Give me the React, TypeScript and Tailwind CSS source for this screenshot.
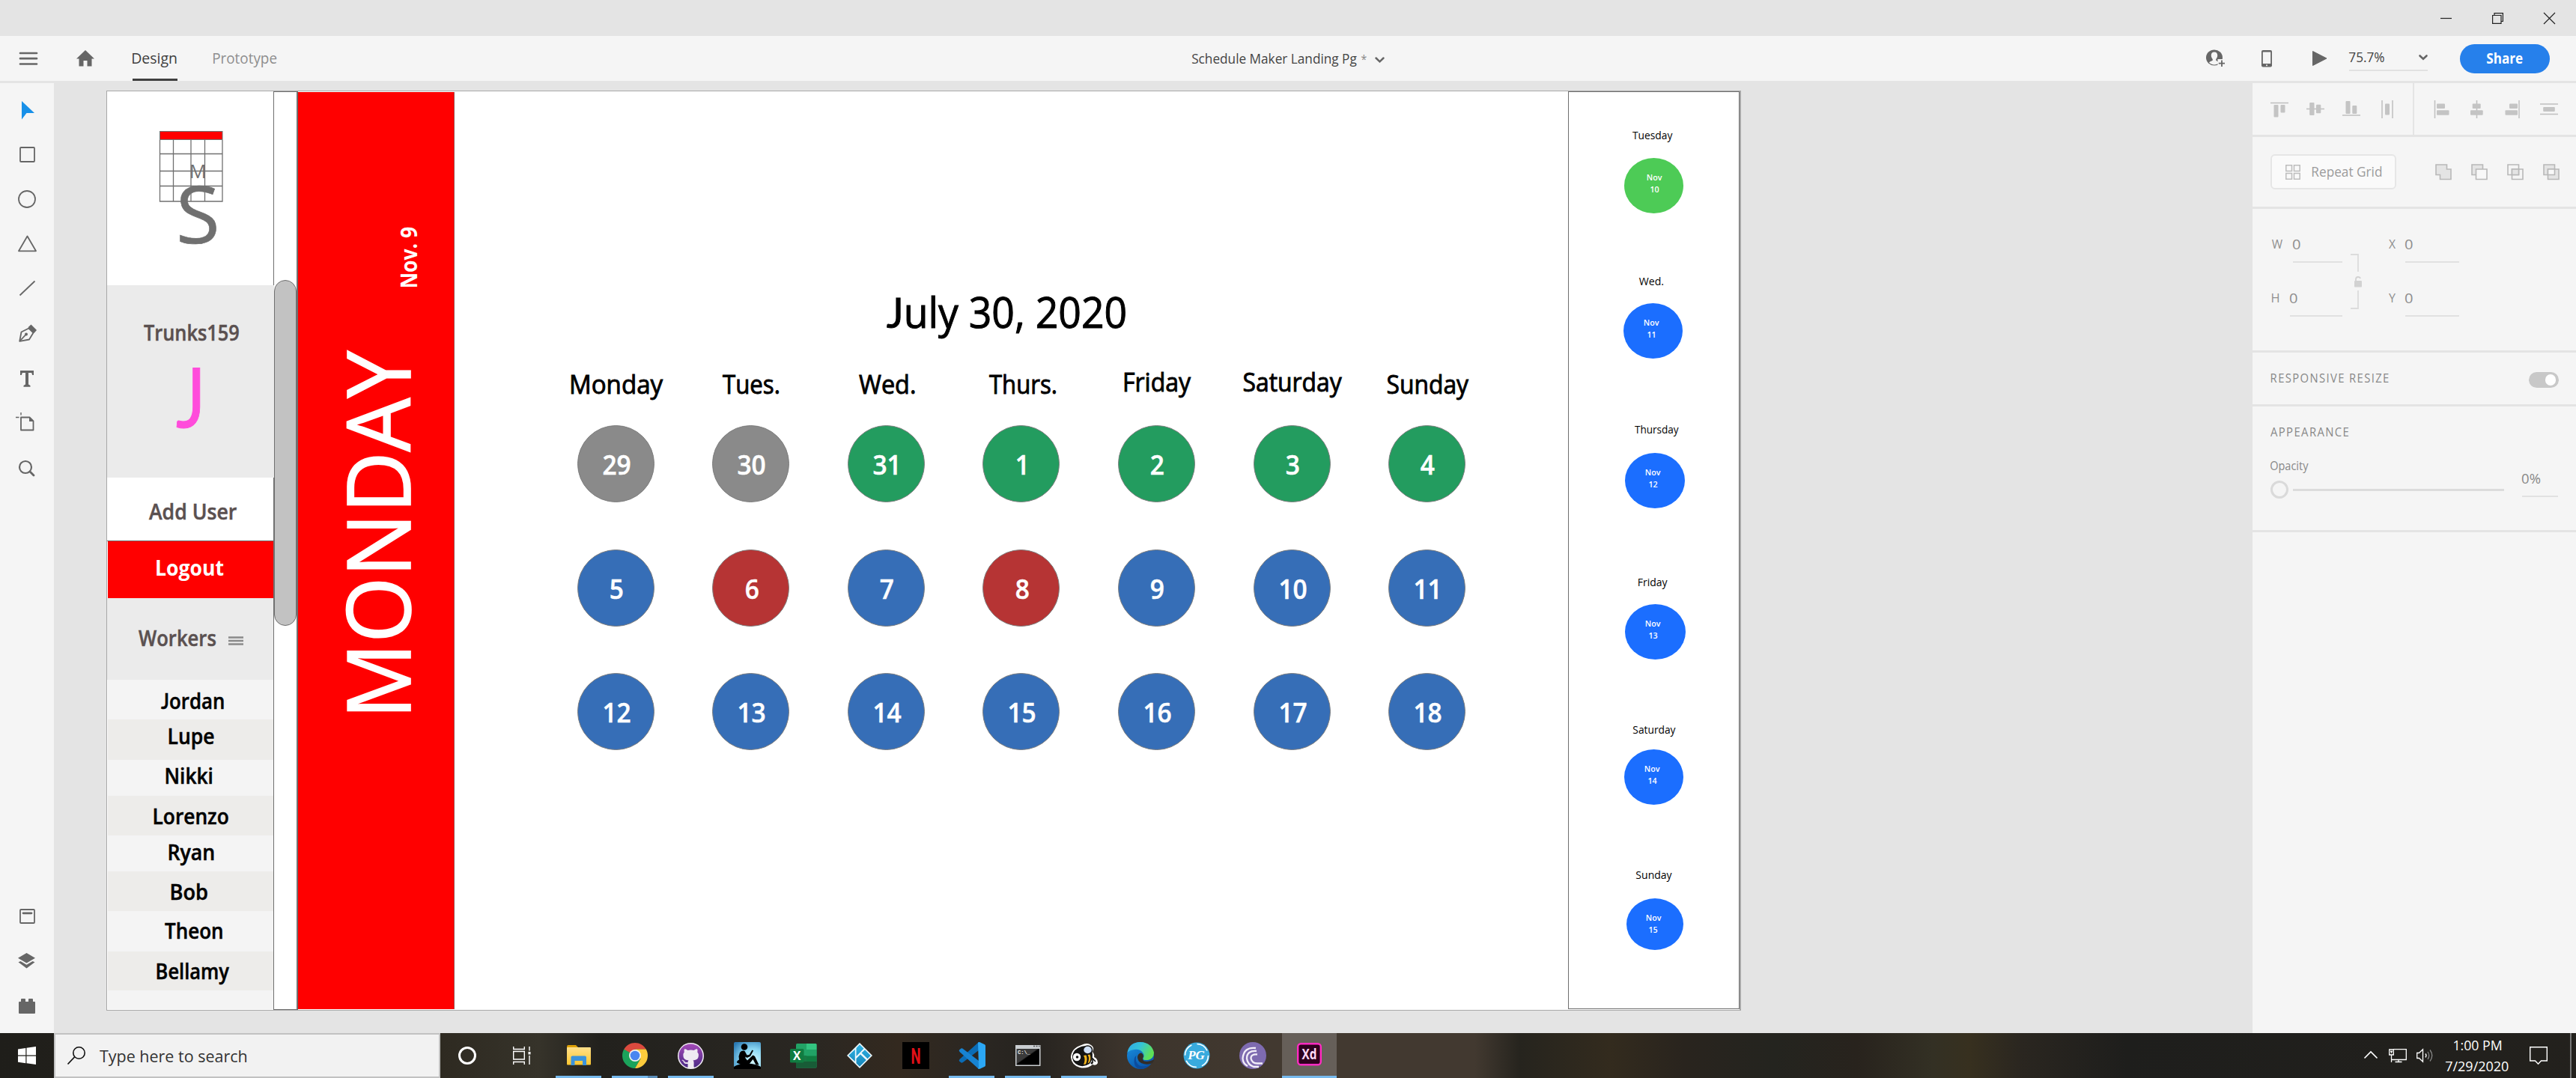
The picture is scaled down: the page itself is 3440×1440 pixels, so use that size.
import React, { useLayoutEffect, useRef, useState } from "react";
import { FaGithub } from "react-icons/fa";

/* A line of text condensed or widened so that its ink fills exactly `w` pixels. */
function Fit({ text, w, className = "" }: { text: string; w: number; className?: string }) {
  const ref = useRef<HTMLDivElement>(null);
  const [fit, setFit] = useState({ k: 1, x: 0 });
  const parts = text[0] === "J" ? ["J", text.slice(1)] : ["", text];
  useLayoutEffect(() => {
    if (!ref.current) return;
    const cs = getComputedStyle(ref.current);
    const size = parseFloat(cs.fontSize);
    const spacing = parseFloat(cs.letterSpacing) || 0;
    const ctx = document.createElement("canvas").getContext("2d")!;
    let total = spacing * (text.length - 1);
    let left: number | null = null;
    let right = 0;
    parts.forEach((p, i) => {
      if (!p) return;
      ctx.font = `${cs.fontWeight} ${size * 10}px "${i === 0 ? "Lato" : "Open Sans"}"`;
      const m = ctx.measureText(p);
      total += m.width / 10;
      if (left === null) left = -m.actualBoundingBoxLeft / 10;
      right = (m.width - m.actualBoundingBoxRight) / 10;
    });
    const lb = left ?? 0;
    const k = w / (total - lb - right);
    setFit({ k, x: -lb * k });
  }, [text, w]);
  return (
    <div ref={ref} className={"shrink-0 whitespace-nowrap leading-none " + className} style={{ width: w }}>
      <div className="w-max origin-left" style={{ transform: `translateX(${fit.x}px) scaleX(${fit.k})` }}>
        {parts[0] && <span className="font-['Lato'] leading-none">{parts[0]}</span>}
        {parts[1]}
      </div>
    </div>
  );
}

function Svg({ w, h, className = "", children }: { w: number; h: number; className?: string; children: React.ReactNode }) {
  return (
    <svg width={w} height={h} viewBox={`0 0 ${w} ${h}`} fill="none" className={"shrink-0 overflow-visible " + className}>
      {children}
    </svg>
  );
}

function TitleBar() {
  return (
    <div className="flex h-12 items-center justify-end gap-[54px] pr-[28px]">
      <Svg w={15} h={15}><path d="M0 7.5H15" stroke="#222" strokeWidth="1.2" /></Svg>
      <Svg w={15} h={15}><path d="M.6 3.5H12V14.4H.6zM3 3.5V.6H14.4V11.5H12" stroke="#222" strokeWidth="1.2" /></Svg>
      <Svg w={15} h={15}><path d="M0 0L15 15M15 0L0 15" stroke="#222" strokeWidth="1.2" /></Svg>
    </div>
  );
}

function Header() {
  return (
    <div className="flex h-[60px] items-center bg-[#f5f5f5]">
      <Svg w={24} h={18} className="ml-[26px]"><path d="M1 2H23M1 9.2H23M1 16.5H23" stroke="#666" strokeWidth="2.7" strokeLinecap="round" /></Svg>
      <Svg w={24} h={22} className="ml-[52px]"><path d="M12 0L24 11.5H20.5V21.5H14.5V14H9.5V21.5H3.5V11.5H0z" fill="#666" strokeLinejoin="round" /></Svg>
      <div className="ml-[51px] flex h-full w-[60px] flex-col justify-between border-b-[3px] border-[#404040] pt-[20px]">
        <Fit text="Design" w={58.5} className="text-[20px] text-[#3f3f3f]" />
      </div>
      <Fit text="Prototype" w={84} className="ml-[48px] text-[20px] text-[#8e8e8e]" />
      <Fit text="Schedule Maker Landing Pg" w={219.5} className="ml-[1223px] text-[19px] text-[#444]" />
      <Fit text="*" w={6.5} className="ml-[6px] text-[17px] text-[#888]" />
      <Svg w={13} h={8} className="ml-[12px] mt-1"><path d="M1.5 1.5L6.5 6.3L11.5 1.5" stroke="#666" strokeWidth="2.5" strokeLinecap="round" /></Svg>
      <div className="ml-auto flex items-center pr-[35px]">
        <Svg w={25} h={24} className="mr-[49px]">
          <ellipse cx="11" cy="11" rx="11" ry="10.5" fill="#666" />
          <path d="M11 3.5C8 3.5 6.8 5.5 6.8 8C6.8 10.5 8 12 8.8 13V14.5C8 15.5 5 16 4 17.5C6 19.5 8.5 20.5 11 20.5C13 20.5 15 19.8 17 18C16.5 16 14 15.5 13.2 14.5V13C14 12 15.2 10.5 15.2 8C15.2 5.5 14 3.5 11 3.5z" fill="#f5f5f5" />
          <rect x="15.5" y="13" width="10" height="12" fill="#f5f5f5" />
          <path d="M21 14.5V23M16.8 18.7H25" stroke="#666" strokeWidth="1.8" />
        </Svg>
        <Svg w={14} h={23} className="mr-[54px]">
          <rect width="14" height="22.5" rx="2" fill="#666" />
          <rect x="1.8" y="2.5" width="10.4" height="15.5" fill="#f5f5f5" />
          <circle cx="7" cy="20.2" r="1" fill="#f5f5f5" />
        </Svg>
        <Svg w={20} h={20} className="mr-[29px]"><path d="M.5 .5L19 10L.5 19.5z" fill="#666" stroke="#666" strokeLinejoin="round" /></Svg>
        <div className="mr-[43px] mt-[4px] flex h-[30px] w-[105px] items-start justify-between border-b-2 border-[#e1e1e1] pt-[2px]">
          <Fit text="75.7%" w={46.8} className="text-[19px] text-[#444]" />
          <Svg w={12} h={8} className="mt-[6px]"><path d="M1.5 1.5L6 5.8L10.5 1.5" stroke="#666" strokeWidth="2.6" strokeLinecap="round" /></Svg>
        </div>
        <div className="flex h-[39px] w-[120px] items-center justify-center rounded-full bg-[#2680eb]">
          <Fit text="Share" w={47.5} className="text-[19px] font-bold text-white" />
        </div>
      </div>
    </div>
  );
}

function ToolBar() {
  const s = { stroke: "#666", strokeWidth: 1.8 };
  return (
    <div className="flex w-[72px] shrink-0 flex-col items-start bg-[#f5f5f5]">
      <Svg w={17} h={25} className="ml-[29px] mt-[24px]"><path d="M0 0V24.5L6.5 16H17z" fill="#1890e8" /></Svg>
      <Svg w={21} h={21} className="ml-[26px] mt-[36px]"><rect x="1" y="1" width="19" height="19" rx="1" {...s} /></Svg>
      <Svg w={24} h={24} className="ml-[24px] mt-[37px]"><circle cx="12" cy="12" r="11" {...s} /></Svg>
      <Svg w={25} h={22} className="ml-[24px] mt-[36px]"><path d="M12.5 1.5L24 21.3H1z" {...s} strokeLinejoin="round" /></Svg>
      <Svg w={21} h={20} className="ml-[26px] mt-[39px]"><path d="M.5 19.5L20.5 .5" {...s} /></Svg>
      <Svg w={24} h={24} className="ml-[25px] mt-[38px]">
        <path d="M1.2 22.8L3.5 10.5L13.5 5.5L19.5 11.5L14 20.5z" {...s} strokeLinejoin="round" />
        <path d="M1.5 22.5L9 14.5" {...s} />
        <circle cx="10" cy="13.5" r="2" fill="#666" />
        <path d="M12.5 4.2L16.5 .5L24 8L20.5 12z" fill="#666" />
      </Svg>
      <Svg w={18} h={22} className="ml-[27px] mt-[38px]"><path d="M0 0H18V6H16.2L15.2 3H11V18.5L13.5 20V21.7H4.5V20L7 18.5V3H2.8L1.8 6H0z" fill="#666" /></Svg>
      <Svg w={25} h={25} className="ml-[21px] mt-[34px]">
        <path d="M7 6.5H18.5L23.5 11.5V23.5H7z" {...s} strokeLinejoin="round" />
        <path d="M18 6V12H24z" fill="#666" />
        <path d="M7 0V3.5M0 6.5H4.5" {...s} strokeWidth={1.4} />
      </Svg>
      <Svg w={21} h={21} className="ml-[25px] mt-[39px]"><circle cx="9" cy="9" r="8" {...s} strokeWidth={2.2} /><path d="M15 15L20 20" {...s} strokeWidth={2.8} strokeLinecap="round" /></Svg>
      <div className="mt-auto flex flex-col items-start pb-[26px]">
        <Svg w={21} h={20} className="ml-[26px]"><rect x="1" y="1" width="19" height="18" rx="1" {...s} /><path d="M5 5.8H16" stroke="#666" strokeWidth="2.8" strokeLinecap="round" /></Svg>
        <Svg w={23} h={21} className="ml-[24px] mt-[39px]"><path d="M11.5 0L23 6.8L11.5 13.4L0 6.8z" fill="#666" /><path d="M.5 12.3L3.5 11L11.5 15.8L19.5 11L22.5 12.3L11.5 20.5z" fill="#666" /></Svg>
        <Svg w={22} h={20} className="ml-[25px] mt-[40px]"><path d="M0 5Q0 4 1 4H3V1Q3 0 4 0H8Q9 0 9 1V4H13V1Q13 0 14 0H18Q19 0 19 1V4H21Q22 4 22 5V19Q22 20 21 20H1Q0 20 0 19z" fill="#666" /></Svg>
      </div>
    </div>
  );
}

const workers = [
  { name: "Jordan", w: 83.4, cls: "h-[53px] pt-[14px] pl-[71px] bg-[#f4f4f4]" },
  { name: "Lupe", w: 59.3, cls: "h-[54px] pt-[8px] pl-[82px] bg-[#edecea]" },
  { name: "Nikki", w: 61.3, cls: "h-[48px] pt-[7px] pl-[78px] bg-[#f4f4f4]" },
  { name: "Lorenzo", w: 98.5, cls: "h-[53px] pt-[13px] pl-[62px] bg-[#edecea]" },
  { name: "Ryan", w: 59.3, cls: "h-[48px] pt-[8px] pl-[82px] bg-[#f4f4f4]" },
  { name: "Bob", w: 47.7, cls: "h-[53px] pt-[13px] pl-[85px] bg-[#edecea]" },
  { name: "Theon", w: 76.7, cls: "h-[54px] pt-[12px] pl-[76px] bg-[#f4f4f4]" },
  { name: "Bellamy", w: 96.2, cls: "h-[52px] pt-[12px] pl-[66px] bg-[#edecea]" },
];

function Sidebar() {
  return (
    <div className="flex w-[222px] shrink-0 flex-col">
      <div className="h-[259px] pl-[70px] pt-[53px]">
        <svg width="90" height="155" viewBox="0 0 90 155" fill="none" className="overflow-visible">
          <rect x=".5" y=".5" width="83.5" height="11" fill="#f00" stroke="#707070" />
          <path d="M.5 12V94H84V12M18.500 12V94M42 12V94M60.500 12V94M0 30.500H84M0 53.500H84M0 73.500H84" stroke="#707070" strokeWidth="1.3" />
          <text x="39.800" y="62.500" fontSize="25.5" fontFamily="Open Sans" fill="#707070">M</text>
          <text x="22" y="150" fontSize="107" fontFamily="Open Sans" fill="#707070" stroke="#707070" strokeWidth=".6">S</text>
        </svg>
      </div>
      <div className="relative -mr-px flex h-[257px] flex-col items-start bg-[#ebebeb] pt-[49px]">
        <Fit text="Trunks159" w={126.8} className="ml-[49px] text-[28.5px] font-semibold text-[#5a5050] [-webkit-text-stroke:0.5px]" />
        <Fit text="J" w={32.3} className="ml-[92px] mt-[14px] text-[111px] text-[#ff4cdb] [-webkit-text-stroke:1px]" />
      </div>
      <div className="h-[85px] border-b border-[#707070] pl-[56px] pt-[31px]">
        <Fit text="Add User" w={117} className="text-[28.5px] font-semibold text-[#5a5050] [-webkit-text-stroke:0.5px]" />
      </div>
      <div className="ml-px h-[76px] bg-[#f00] pl-[65px] pt-[21px]">
        <Fit text="Logout" w={89.4} className="text-[28.5px] font-bold text-white" />
      </div>
      <div className="flex h-[109px] items-start bg-[#ebebeb] pl-[42px] pt-[39px]">
        <Fit text="Workers" w={103} className="text-[28.5px] font-semibold text-[#5a5050] [-webkit-text-stroke:0.5px]" />
        <Svg w={20} h={12} className="ml-[17px] mt-[12px]"><path d="M0 1.500H20M0 6H20M0 10.500H20" stroke="#8a8a8a" strokeWidth="2.6" /></Svg>
      </div>
      {workers.map((p) => (
        <div key={p.name} className={"ml-px " + p.cls}>
          <Fit text={p.name} w={p.w} className="text-[28.5px] font-semibold text-black [-webkit-text-stroke:0.5px]" />
        </div>
      ))}
      <div className="ml-px mb-px flex-1 bg-[#f4f4f4]" />
    </div>
  );
}

function ScrollTrack() {
  return (
    <div className="flex w-[33px] shrink-0 flex-col border-b border-l border-r-2 border-t border-[#707070] pt-[251px]">
      <div className="h-[462px] w-[30px] rounded-[15px] border border-[#707070] bg-[#c2c2c2]" />
    </div>
  );
}

function DayBanner() {
  return (
    <div className="mb-px mt-px flex w-[209px] shrink-0 flex-col items-start border-r border-[#a05050] bg-[#f00]">
      <div className="ml-[131px] mt-[180px] flex h-[80px] w-[31px] items-center justify-center">
        <Fit text="Nov. 9" w={80} className="-rotate-90 text-[31px] font-bold text-white" />
      </div>
      <div className="ml-[46px] mt-[84px] flex h-[483px] w-[118px] items-center justify-center">
        <Fit text="MONDAY" w={482} className="-rotate-90 text-[118px] text-white [-webkit-text-stroke:1.6px]" />
      </div>
    </div>
  );
}

const weekdays: [string, number, string][] = [
  ["Monday", 122.6, "pt-[3px] pl-[4px]"],
  ["Tues.", 75, "pt-[3px]"],
  ["Wed.", 74.5, "pt-[3px] pl-[1px]"],
  ["Thurs.", 89, "pt-[3px] pl-[3px]"],
  ["Friday", 88.6, "pl-[4px]"],
  ["Saturday", 131.2, "pl-[2px]"],
  ["Sunday", 108.5, "pt-[3px] pl-[4px]"],
];
const GRAY = "bg-[#8a8a8a]";
const GREEN = "bg-[#239c5f]";
const BLUE = "bg-[#366eb7]";
const RED = "bg-[#b63434]";
const dates: [number, string][] = [
  [29, GRAY], [30, GRAY], [31, GREEN], [1, GREEN], [2, GREEN], [3, GREEN], [4, GREEN],
  [5, BLUE], [6, RED], [7, BLUE], [8, RED], [9, BLUE], [10, BLUE], [11, BLUE],
  [12, BLUE], [13, BLUE], [14, BLUE], [15, BLUE], [16, BLUE], [17, BLUE], [18, BLUE],
];

function Calendar() {
  return (
    <div className="flex flex-1 flex-col items-start bg-white pt-[266px]">
      <Fit text="July 30, 2020" w={319} className="ml-[577px] text-[57px] text-black [-webkit-text-stroke:1px]" />
      <div className="ml-[125px] mt-[48px] grid w-[1264px] grid-cols-7">
        {weekdays.map(([d, w, cls]) => (
          <div key={d} className={"flex h-[75px] items-start justify-center " + cls}>
            <Fit text={d} w={w} className="text-[34px] text-black [-webkit-text-stroke:0.9px]" />
          </div>
        ))}
      </div>
      <div className="ml-[125px] grid w-[1264px] grid-cols-7 justify-items-center gap-y-[62.7px]">
        {dates.map(([n, color]) => (
          <div key={n} className={"flex size-[103px] items-center justify-center rounded-full border border-[#7d7d7d] pl-[2px] pt-[3px] text-[36px] font-semibold leading-none text-white [-webkit-text-stroke:0.5px] " + color}>
            <span className="inline-block scale-x-[0.93]">{n}</span>
          </div>
        ))}
      </div>
    </div>
  );
}

const upcoming = [
  { day: "Tuesday", w: 53.4, n: 10, row: "h-[195px]", label: "ml-[85px]", disc: "ml-[74px] mt-[23px] w-[79px] h-[74px] pl-[2px] bg-[#4dcb56]" },
  { day: "Wed.", w: 32, n: 11, row: "h-[198px]", label: "ml-[94px]", disc: "ml-[73px] mt-[22px] w-[79px] h-[74px] pr-[4px] bg-[#1b6eff]" },
  { day: "Thursday", w: 58.7, n: 12, row: "h-[204px]", label: "ml-[88px]", disc: "ml-[75px] mt-[24px] w-[80px] h-[74px] pr-[5px] bg-[#1b6eff]" },
  { day: "Friday", w: 38.6, n: 13, row: "h-[197px]", label: "ml-[93px]", disc: "ml-[75px] mt-[22px] w-[81px] h-[74px] pr-[6px] bg-[#1b6eff]" },
  { day: "Saturday", w: 56.6, n: 14, row: "h-[194px]", label: "ml-[86px]", disc: "ml-[74px] mt-[19px] w-[79px] h-[74px] pr-[4px] bg-[#1b6eff]" },
  { day: "Sunday", w: 47.7, n: 15, row: "h-[150px]", label: "ml-[90px]", disc: "ml-[77px] mt-[24px] w-[76px] h-[69px] pr-[4px] bg-[#1b6eff]" },
];

function Upcoming() {
  return (
    <div className="mb-px flex w-[229px] shrink-0 flex-col border border-[#707070] bg-white pt-[50px]">
      {upcoming.map((u) => (
        <div key={u.day} className={u.row}>
          <Fit text={u.day} w={u.w} className={"text-[15px] text-black " + u.label} />
          <div className={"flex flex-col items-center rounded-[50%] pt-[18px] text-[11.5px] font-semibold leading-[16px] text-white " + u.disc}>
            <span className="inline-block scale-x-[0.93]">Nov</span>
            <span className="inline-block scale-x-[0.93]">{u.n}</span>
          </div>
        </div>
      ))}
    </div>
  );
}

function BoolIcon({ kind }: { kind: number }) {
  const a = "M1 1H15.500V14.500H1z";
  const b = "M6.500 7H21V20.500H6.500z";
  const st = { stroke: "#b8b8b8", strokeWidth: 1.6 };
  return (
    <Svg w={22} h={22}>
      {kind === 0 && <path d="M1 1H15.500V7H21V20.500H6.500V14.500H1z" fill="#e4e4e4" {...st} />}
      {kind === 1 && <><path d={a} fill="#e4e4e4" {...st} /><path d={b} fill="#f8f8f8" {...st} /></>}
      {kind === 2 && <><path d={a} {...st} /><path d={b} {...st} /><path d="M6.500 7H15.500V14.500H6.500z" fill="#e4e4e4" {...st} /></>}
      {kind === 3 && <><path d={a} fill="#e4e4e4" {...st} /><path d={b} fill="#e4e4e4" {...st} /><path d="M6.500 7H15.500V14.500H6.500z" fill="#f8f8f8" {...st} /></>}
    </Svg>
  );
}

function Field({ k, kw, cls }: { k: string; kw: number; cls: string }) {
  return (
    <div className="flex h-[34px] items-start">
      <Fit text={k} w={kw} className="mt-[1px] text-[16px] text-[#909090]" />
      <div className={"h-[34px] border-b-2 border-[#e1e1e1] " + cls}>
        <Fit text="0" w={9.5} className="text-[18px] text-[#8e8e8e]" />
      </div>
    </div>
  );
}

function Inspector() {
  const c = { stroke: "#bfbfbf", strokeWidth: 1.5 };
  const f = "#c4c4c4";
  return (
    <div className="flex w-[432px] shrink-0 flex-col gap-[3px] bg-[#e4e4e4]">
      <div className="flex h-[69px] gap-[2px]">
        <div className="flex w-[214px] items-center gap-[24px] bg-[#f5f5f5] pl-[24px]">
          <Svg w={24} h={24}><path d="M0 3.500H24" {...c} /><rect x="4.500" y="6" width="6" height="16.500" rx="1" fill={f} /><rect x="13.500" y="6" width="6" height="10.500" rx="1" fill={f} /></Svg>
          <Svg w={24} h={24}><path d="M0 11.500H24" {...c} /><rect x="4.200" y="3" width="6.300" height="17" rx="1" fill={f} /><rect x="13" y="5.700" width="6.300" height="11.500" rx="1" fill={f} /></Svg>
          <Svg w={24} h={24}><path d="M0 20H24" {...c} /><rect x="4.500" y="1" width="6" height="17" rx="1" fill={f} /><rect x="13.300" y="7" width="6" height="11" rx="1" fill={f} /></Svg>
          <Svg w={24} h={24}><path d="M5 0V24M19 0V24" {...c} /><rect x="9" y="4.600" width="6" height="15" rx="1" fill={f} /></Svg>
        </div>
        <div className="flex w-[216px] items-center gap-[24px] bg-[#f5f5f5] pl-[24px]">
          <Svg w={24} h={24}><path d="M3.500 0V24" {...c} /><rect x="6" y="4.600" width="11" height="6.400" rx="1" fill={f} /><rect x="6" y="13.300" width="16.500" height="6.400" rx="1" fill={f} /></Svg>
          <Svg w={24} h={24}><path d="M11.500 0V24" {...c} /><rect x="5.700" y="4.600" width="11" height="6.400" rx="1" fill={f} /><rect x="3" y="13.300" width="16.700" height="6.400" rx="1" fill={f} /></Svg>
          <Svg w={24} h={24}><path d="M20 0V24" {...c} /><rect x="7" y="4.600" width="11" height="6.400" rx="1" fill={f} /><rect x="1.500" y="13.300" width="16.500" height="6.400" rx="1" fill={f} /></Svg>
          <Svg w={24} h={24}><path d="M0 5H24M0 18.500H24" {...c} /><rect x="4.200" y="9" width="15.600" height="6" rx="1" fill={f} /></Svg>
        </div>
      </div>
      <div className="flex h-[93px] items-center bg-[#f5f5f5] pl-[24px]">
        <div className="flex h-[47px] w-[168px] items-center rounded-md border-2 border-[#e6e6e6] bg-[#fafafa] pl-[18px]">
          <Svg w={20} h={20}><path d="M.8 .8H8.500V8.500H.8zM11.500 .8H19.200V8.500H11.500zM.8 11.500H8.500V19.200H.8zM11.500 11.500H19.200V19.200H11.500z" stroke="#bdbdbd" strokeWidth="1.5" /></Svg>
          <Fit text="Repeat Grid" w={92} className="ml-[16px] text-[19px] text-[#9c9c9c]" />
        </div>
        <div className="ml-[52px] flex gap-[26px]">{[0, 1, 2, 3].map((k) => <BoolIcon key={k} kind={k} />)}</div>
      </div>
      <div className="flex h-[189px] items-start bg-[#f5f5f5] pl-[26px] pt-[38px]">
        <div className="flex w-[94px] flex-col gap-[38px]">
          <Field k="W" kw={14} cls="ml-[14px] w-[66px]" />
          <Field k="H" kw={9} cls="ml-[15px] w-[70px]" />
        </div>
        <Svg w={15} h={74} className="ml-[11px] mt-[22px]">
          <path d="M0 1H10V24M10 49V73H0" stroke="#dcdcdc" strokeWidth="1.800" />
          <rect x="5" y="36" width="10" height="8.500" rx="1" fill="#d2d2d2" />
          <path d="M7 37V34Q7 31 10 31Q12.500 31 13 33" stroke="#d2d2d2" strokeWidth="1.800" />
        </Svg>
        <div className="ml-[36px] flex flex-col gap-[38px]">
          <Field k="X" kw={9} cls="ml-[13px] w-[72px]" />
          <Field k="Y" kw={9} cls="ml-[13px] w-[72px]" />
        </div>
      </div>
      <div className="flex h-[69px] items-center justify-between bg-[#f5f5f5] pl-[25px] pr-[23px]">
        <Fit text="RESPONSIVE RESIZE" w={156.500} className="pb-[2px] text-[16px] tracking-[1.500px] text-[#888]" />
        <div className="mt-[4px] flex h-[21px] w-[40px] items-center justify-end rounded-full bg-[#c8c8c8] pr-[4px]">
          <div className="size-[14.500px] rounded-full bg-white" />
        </div>
      </div>
      <div className="flex h-[165px] flex-col items-start bg-[#f5f5f5] pl-[24px] pt-[26px]">
        <Fit text="APPEARANCE" w={104} className="text-[16px] tracking-[1.500px] text-[#888]" />
        <Fit text="Opacity" w={50.500} className="mt-[29px] text-[16px] text-[#888]" />
        <div className="flex h-[38px] items-start">
          <div className="mt-[12px] size-[24px] rounded-full border-[3px] border-[#dadada]" />
          <div className="ml-[6px] mt-[23px] h-[3px] w-[282px] bg-[#dcdcdc]" />
          <div className="ml-[24px] h-[34px] w-[48px] border-b-2 border-[#e1e1e1]">
            <Fit text="0%" w={24} className="text-[18px] text-[#888]" />
          </div>
        </div>
      </div>
      <div className="flex-1 bg-[#f5f5f5]" />
    </div>
  );
}

const defs = (
  <svg width="0" height="0" className="absolute">
    <defs>
      <linearGradient id="fold" x1="0" y1="0" x2="0" y2="1"><stop offset="0" stopColor="#ffe08a" /><stop offset="1" stopColor="#fcc630" /></linearGradient>
      <linearGradient id="gh" x1="0" y1="0" x2="0" y2="1"><stop offset="0" stopColor="#a44ab8" /><stop offset="1" stopColor="#4c2a86" /></linearGradient>
      <radialGradient id="kin" cx=".7" cy=".7" r=".9"><stop offset="0" stopColor="#d6f8ff" /><stop offset=".5" stopColor="#8ad6f2" /><stop offset="1" stopColor="#2a7ab4" /></radialGradient>
      <linearGradient id="edgeTop" x1="0" y1="0" x2="1" y2=".4"><stop offset="0" stopColor="#2fa8e8" /><stop offset=".5" stopColor="#35c3d6" /><stop offset="1" stopColor="#5fe055" /></linearGradient>
      <linearGradient id="edgeBot" x1="0" y1="0" x2=".6" y2="1"><stop offset="0" stopColor="#1a95e6" /><stop offset="1" stopColor="#0a55a8" /></linearGradient>
      <linearGradient id="cmd" x1="0" y1="0" x2="1" y2="1"><stop offset=".45" stopColor="#3a3a3a" /><stop offset=".5" stopColor="#000" /></linearGradient>
      <linearGradient id="kodi" x1="0" y1="0" x2="0" y2="1"><stop offset="0" stopColor="#2fb4e6" /><stop offset="1" stopColor="#1584b8" /></linearGradient>
    </defs>
  </svg>
);

const apps: { id: string; open?: "one" | "wide"; icon: React.ReactNode }[] = [
  { id: "explorer", open: "one", icon: (
    <Svg w={32} h={28}><path d="M0 2Q0 0 2 0H12L15 3V8H0z" fill="#dda006" /><rect y="3" width="32" height="23.500" rx="1" fill="url(#fold)" /><path d="M5.500 27V16.500Q5.500 14.500 7.500 14.500H24Q26 14.500 26 16.500V27H21V21H10.500V27z" fill="#3b93dc" /></Svg>) },
  { id: "chrome", open: "wide", icon: (
    <Svg w={34} h={34}>
      <path d="M17 17L2.300 8.500A17 17 0 0 1 31.700 8.500L17 8.500z" fill="#db4a3e" />
      <path d="M17 17L2.300 8.500A17 17 0 0 0 17 34L24.400 21.200z" fill="#1ba35b" />
      <path d="M17 8.500H31.700A17 17 0 0 1 17 34L24.400 21.200z" fill="#fdcb3c" />
      <path d="M2.300 8.500L9.700 21.200L17 17z" fill="#1ba35b" /><path d="M2.300 8.500L17 8.500V17z" fill="#db4a3e" />
      <circle cx="17" cy="17" r="8" fill="#f1f1f1" /><circle cx="17" cy="17" r="6.300" fill="#4a86f0" />
    </Svg>) },
  { id: "github", open: "one", icon: (
    <div className="flex size-[35px] items-center justify-center rounded-full bg-[#efeaf2]">
      <FaGithub size={33} className="[&_path]:fill-[url(#gh)]" />
    </div>) },
  { id: "kindle", icon: (
    <Svg w={36} h={36}>
      <rect width="36" height="36" rx="2" fill="url(#kin)" />
      <path d="M0 36V33Q8 28 18 28.500Q30 29 36 33V36z" fill="#000" />
      <circle cx="14" cy="6.500" r="4.300" fill="#000" />
      <path d="M8 14Q11 10.500 14.500 12L17.500 17.500L20.500 17L24.500 10.500L26 11.500L22 19L17.500 21L15.500 19.500V21.500L18 24.500L25.500 17.500L28 19L33.500 30.500H29.500L25.500 23L20 30H9L4 27.500Q3.500 25.500 7 23.500L6.500 19z" fill="#000" />
    </Svg>) },
  { id: "excel", icon: (
    <Svg w={36} h={33}>
      <rect x="8" width="27.500" height="32.500" rx="1.500" fill="#22a366" /><path d="M22 0H34Q35.500 0 35.500 1.500V8H22z" fill="#33c481" /><rect x="22" y="8" width="13.500" height="8.500" fill="#21a366" /><rect x="22" y="16.500" width="13.500" height="7.500" fill="#107c41" /><path d="M8 24H35.500V31Q35.500 32.500 34 32.500H9.500Q8 32.500 8 31z" fill="#185c37" /><rect x="8" y="16" width="14" height="8" fill="#187a45" />
      <rect y="7" width="18.500" height="18.500" rx="1.500" fill="#107c41" />
      <text x="9.200" y="21.800" textAnchor="middle" fontSize="15.500" fontWeight="700" fontFamily="Open Sans" fill="#fff">X</text>
    </Svg>) },
  { id: "kodi", icon: (
    <Svg w={34} h={34}>
      <path d="M17 0L34 17L17 34L0 17z" fill="#eef8fc" />
      <path d="M17 2.200L22.500 7.700L12.500 18V7z M24 9.200L31.800 17L27.500 21.200L19.500 13.500z M10.800 8.800V25L2.200 17z M18 15.500L25.800 23L17 31.800L12.500 27.200V21z" fill="url(#kodi)" />
    </Svg>) },
  { id: "netflix", icon: (
    <Svg w={36} h={36}><rect width="36" height="36" fill="#000" /><text x="18" y="28.500" textAnchor="middle" fontSize="30" fontWeight="700" fontFamily="Roboto" fill="#e01018" textLength="13" lengthAdjust="spacingAndGlyphs">N</text></Svg>) },
  { id: "vscode", open: "one", icon: (
    <Svg w={36} h={36}>
      <path d="M27 0L2 22.500Q0 24.500 1 25.500L3.500 27.500Q4.500 28 6 27L27 11z" fill="#0b6cb5" />
      <path d="M27 36L2 13.500Q0 11.500 1 10.500L3.500 8.500Q4.500 8 6 9L27 25z" fill="#1783d2" />
      <path d="M26 .5L28 0L35 3.300Q36 4 36 5V31Q36 32 35 32.700L28 36L26 35.500L27 33z" fill="#2ba7f5" />
    </Svg>) },
  { id: "terminal", open: "one", icon: (
    <Svg w={34} h={28}><rect width="33.500" height="28" fill="#c9cdd0" /><rect x="1.500" y="5" width="30.500" height="21.500" fill="url(#cmd)" /><path d="M24 1.500h2m1.500 0h2m1.500 0h1.500" stroke="#555" strokeWidth="1.500" /><text x="3" y="12" fontSize="7" fontWeight="700" fontFamily="Liberation Mono" fill="#eee">C:\_</text></Svg>) },
  { id: "bee", open: "one", icon: (
    <Svg w={36} h={33}>
      <path d="M14 2Q22 -2 27 2Q32 5 29 11Q32 15 31 18Q36 20 36 26Q34 30 29 28Q22 34 12 32Q1 29 0 18Q1 6 14 2z" fill="#fff" />
      <path d="M14 4Q22 1 28 9Q31 20 25 27Q17 32 10 29Q1 25 2 16Q4 7 14 4z" fill="#141414" />
      <path d="M17 16Q20 21 17 28L20 27.500Q23 21 20.500 15.500zM22.500 15Q25.500 20 22.500 26.500L25 25Q27.500 20 25.500 14.500z" fill="#f2b41c" />
      <ellipse cx="22.500" cy="8.500" rx="6" ry="5.500" fill="#cfe0f8" stroke="#141414" strokeWidth="1.500" />
      <circle cx="8" cy="18" r="5.200" fill="#fff" /><circle cx="8.500" cy="18" r="1.800" fill="#111" />
      <path d="M29 19V26M29 20L33 24" stroke="#111" strokeWidth="1.600" /><circle cx="28" cy="26" r="1.500" fill="#111" />
    </Svg>) },
  { id: "edge", icon: (
    <Svg w={36} h={36}>
      <circle cx="18" cy="18" r="18" fill="url(#edgeBot)" />
      <path d="M.5 14Q3 0 18 0Q33 1 36 14Q36 22 28 24Q21 24.500 21.500 21.500Q24 18 21 14Q17 9 10 10Q4 10.500 .5 14z" fill="url(#edgeTop)" />
      <path d="M14 20Q14.500 15 19 14.500Q23 16.500 21.500 20.500Q20 23.500 23 25.500Q29 27 35.500 23.500L36 25Q34 28 32 29Q25 31 19 28Q14 25 14 20z" fill="#332d28" />
      <path d="M12.500 18Q10 26 16 31Q22 34 30 30.500Q25 36 18 36Q10 35 9.500 26Q9.500 20 12.500 18z" fill="#0c4c9c" />
    </Svg>) },
  { id: "pg", icon: (
    <Svg w={36} h={36}>
      <circle cx="18" cy="18" r="17.500" fill="#38aadd" /><circle cx="18" cy="18" r="15.500" stroke="#fff" strokeWidth="1.600" strokeDasharray="17 7.350" />
      <text x="17.500" y="23" textAnchor="middle" fontSize="17" fontWeight="700" fontStyle="italic" fontFamily="Liberation Serif" fill="#fff">PG</text>
    </Svg>) },
  { id: "torrent", icon: (
    <Svg w={36} h={36}>
      <circle cx="18" cy="18" r="18" fill="#7e6bb0" />
      <path d="M22 8Q6 6 4.500 22Q5 29 11 32M23 12Q10 11 10 22Q11 30 19 33H26M24 16.500Q15 16 15.500 22Q17 28.500 24 28.500H31" stroke="#f2eef8" strokeWidth="2.300" />
    </Svg>) },
];

function TaskBar() {
  return (
    <div className="flex h-[60px] bg-[linear-gradient(90deg,#1f1e1a_0px,#2e2a21_590px,#36332a_720px,#22211d_800px,#2a2722_1080px,#33291f_1200px,#2b2722_1300px,#26231f_1380px,#3c342c_1500px,#423930_1700px,#423930_1970px,#26241e_2030px,#332b1e_2150px,#29241e_2250px,#24241f_2370px,#28231d_2480px,#333024_2580px,#37301f_2630px,#2a2620_2700px,#1e1e1c_2840px,#23211d_3440px)]">
      <div className="flex w-[72px] shrink-0 items-center justify-center">
        <Svg w={24} h={24}><path d="M0 3.500L10.300 2V11.500H0zM11.500 1.800L24 0V11.500H11.500zM0 12.700H10.300V22.200L0 20.700zM11.500 12.700H24V24L11.500 22.300z" fill="#fff" /></Svg>
      </div>
      <div className="flex w-[516px] shrink-0 items-center border-2 border-[#c2c2c2] bg-[#f2f2f2] pl-[16px]">
        <Svg w={24} h={24}><circle cx="15.500" cy="8.500" r="7.700" stroke="#111" strokeWidth="1.600" /><path d="M9.500 14L.5 23.500" stroke="#111" strokeWidth="1.800" /></Svg>
        <Fit text="Type here to search" w={196} className="ml-[19px] text-[22px] text-[#333]" />
      </div>
      <div className="flex w-[72px] shrink-0 items-center justify-center"><div className="size-[24px] rounded-full border-[3px] border-white" /></div>
      <div className="flex w-[75px] shrink-0 items-center justify-center pr-[2px]">
        <Svg w={24} h={24}><path d="M.7 0V3.500H15.300V0M.7 6.500H15.300V17H.7zM.7 24V20.500H15.300V24M22 0V5.500M22 12V24" stroke="#fff" strokeWidth="1.400" /><rect x="20.500" y="7" width="3" height="3.500" fill="#fff" /></Svg>
      </div>
      {apps.map((a) => (
        <div key={a.id} className="flex w-[75px] shrink-0 flex-col items-center">
          <div className="flex h-[57px] items-center pt-[3px]">{a.icon}</div>
          {a.open === "one" && <div className="h-[3px] w-[61px] bg-[#76b9ed]" />}
          {a.open === "wide" && <div className="h-[3px] w-[61px] border-r-[13px] border-[#5a8db8] bg-[#76b9ed]" />}
        </div>
      ))}
      <div className="ml-[2px] flex w-[73px] shrink-0 flex-col items-center border-b-[3px] border-[#76b9ed] bg-[#665f59] pt-[13px]">
        <Svg w={33} h={30}>
          <rect x="1.200" y="1.200" width="30.600" height="28" rx="4" fill="#2e001e" stroke="#ff2bc2" strokeWidth="2.400" />
          <text x="16.500" y="21.500" textAnchor="middle" fontSize="19" fontWeight="700" fontFamily="Open Sans" fill="#ffd9f5" textLength="20" lengthAdjust="spacingAndGlyphs">Xd</text>
        </Svg>
      </div>
      <div className="ml-auto flex items-center">
        <Svg w={18} h={10} className="mr-[15px] mt-[-2px]"><path d="M.5 9.500L9 1L17.500 9.500" stroke="#fff" strokeWidth="1.700" /></Svg>
        <Svg w={24} h={18} className="mr-[13px]"><path d="M6 .7H23.300V14.500H3.500M.7 1V8H6.300V1zM3.500 8V18M3.500 3.500V6M2 3.500H5M13 14.500V17.500M8.500 17.500H17.500" stroke="#fff" strokeWidth="1.300" /></Svg>
        <Svg w={22} h={18} className="mr-[17px]"><path d="M.7 5.500H3.500L8.500 .8V17.200L3.500 12.500H.7z" stroke="#fff" strokeWidth="1.300" /><path d="M12 6.500Q14 9 12 11.500" stroke="#fff" strokeWidth="1.300" /><path d="M15 4Q18.500 9 15 14M18 1.500Q23.500 9 18 16.500" stroke="#888" strokeWidth="1.300" /></Svg>
        <div className="flex h-[60px] w-[84px] flex-col items-center gap-[10px] pt-[7px]">
          <Fit text="1:00 PM" w={63} className="text-[18px] text-white" />
          <Fit text="7/29/2020" w={83.500} className="text-[18px] text-white" />
        </div>
        <Svg w={24} h={24} className="ml-[28px] mr-[30px]"><path d="M.7 .7H23.300V19H15.500L11.500 23.300L7.500 19H.7z" stroke="#fff" strokeWidth="1.400" /></Svg>
        <div className="mr-[6px] h-[60px] w-[2px] bg-[#777]" />
      </div>
    </div>
  );
}

export default function App() {
  return (
    <div className="flex h-[1440px] w-[3440px] flex-col overflow-hidden bg-[#e4e4e4] font-['Open_Sans',sans-serif]">
      {defs}
      <TitleBar />
      <Header />
      <div className="mt-[3px] flex h-[1269px]">
        <ToolBar />
        <div className="flex-1 pl-[70px] pt-[10px]">
          <div className="flex h-[1229px] w-[2183px] border border-r-2 border-[#a8a8a8] bg-white">
            <Sidebar />
            <ScrollTrack />
            <DayBanner />
            <Calendar />
            <Upcoming />
          </div>
        </div>
        <Inspector />
      </div>
      <TaskBar />
    </div>
  );
}
